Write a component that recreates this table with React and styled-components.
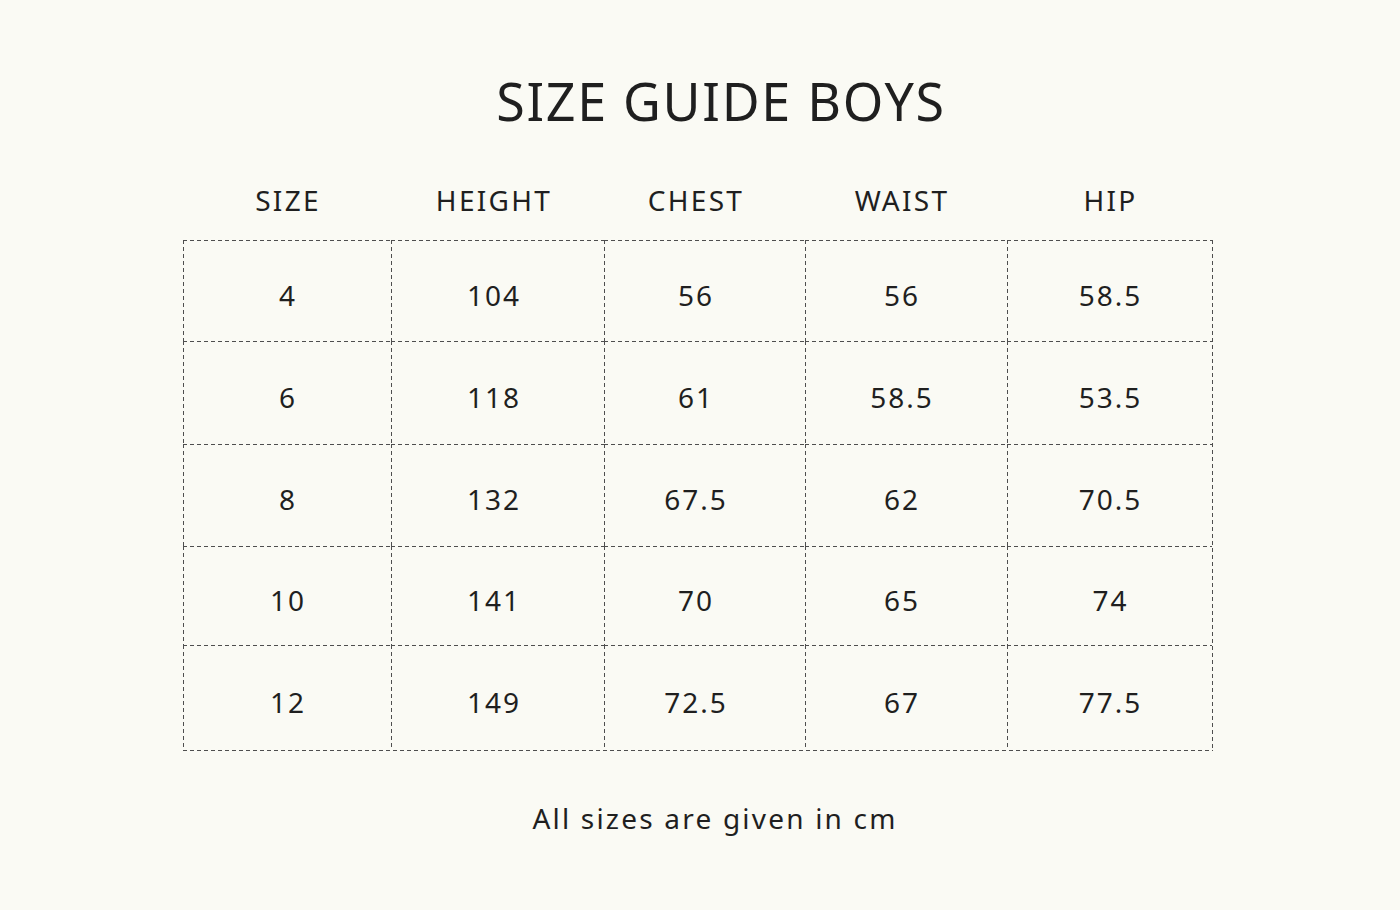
import React from 'react';
import styled, { createGlobalStyle } from 'styled-components';

const GlobalStyle = createGlobalStyle`
	html, body {
		margin: 0;
		padding: 0;
		background-color: #fafaf4;
	}
	body {
		font-family: 'Noto Sans', 'Open Sans', sans-serif;
		color: #1f1f1f;
	}
`;

// text in the source sits a little left of some column centres
const columns = [
	{ label: 'SIZE', shift: 0 },
	{ label: 'HEIGHT', shift: 9 },
	{ label: 'CHEST', shift: 19 },
	{ label: 'WAIST', shift: 10 },
	{ label: 'HIP', shift: 0 },
];

const rows = [
	{ height: 101, values: ['4', '104', '56', '56', '58.5'] },
	{ height: 103, values: ['6', '118', '61', '58.5', '53.5'] },
	{ height: 102, values: ['8', '132', '67.5', '62', '70.5'] },
	{ height: 99, values: ['10', '141', '70', '65', '74'] },
	{ height: 105, values: ['12', '149', '72.5', '67', '77.5'] },
];

const dashColor = '#4e4e4e';
const dashH = `repeating-linear-gradient(to right, ${dashColor} 0 4px, transparent 4px 7px)`;
const dashV = `repeating-linear-gradient(to bottom, ${dashColor} 0 4px, transparent 4px 7px)`;

const App = () => {
	return (
		<Page>
			<GlobalStyle />
			<Title>SIZE GUIDE BOYS</Title>
			<HeaderRow>
				{columns.map((c) => (
					<HeadCell key={c.label} $shift={c.shift}>
						{c.label}
					</HeadCell>
				))}
			</HeaderRow>
			<Grid $rows={rows.map((r) => `${r.height}px`).join(' ')}>
				{rows.map((r) =>
					r.values.map((v, i) => (
						<Cell key={`${r.values[0]}-${i}`} $shift={columns[i].shift}>
							{v}
						</Cell>
					))
				)}
			</Grid>
			<Note>All sizes are given in cm</Note>
		</Page>
	);
};

const colTemplate = '208px 213px 201px 202px 205px';

const Page = styled.div`
	width: 1400px;
	height: 910px;
	display: flex;
	flex-direction: column;
	align-items: center;
	box-sizing: border-box;
	padding-top: 70px;
`;

const Title = styled.h1`
	margin: 0 0 0 42px;
	font-size: 52px;
	line-height: 62px;
	font-weight: 400;
	letter-spacing: 1.7px;
`;

const HeaderRow = styled.div`
	display: grid;
	grid-template-columns: ${colTemplate};
	height: 59px;
	margin: 49px 0 0 -4px;
	padding-right: 1px;
`;

const HeadCell = styled.div`
	padding: 0 ${(p) => p.$shift}px 0 2px;
	font-size: 28px;
	line-height: 38px;
	letter-spacing: 2.3px;
	text-align: center;
`;

const Grid = styled.div`
	display: grid;
	grid-template-columns: ${colTemplate};
	grid-template-rows: ${(p) => p.$rows};
	margin-left: -4px;
	padding: 0 1px 1px 0;
	background:
		${dashH} left bottom / 100% 1px no-repeat,
		${dashV} right top / 1px 100% no-repeat;
`;

const Cell = styled.div`
	display: flex;
	align-items: center;
	justify-content: center;
	padding: 8px ${(p) => p.$shift}px 0 2px;
	font-size: 28px;
	letter-spacing: 2px;
	background:
		${dashH} left top / 100% 1px no-repeat,
		${dashV} left top / 1px 100% no-repeat;
`;

const Note = styled.p`
	margin: 48px 0 0 30px;
	font-size: 28px;
	letter-spacing: 2.2px;
`;

export default App;
